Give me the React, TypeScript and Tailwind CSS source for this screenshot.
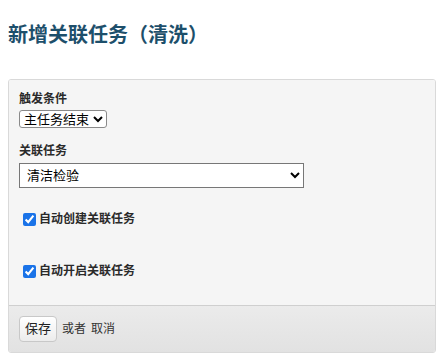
import React from "react";

const FONT = '"Liberation Sans", "Noto Sans CJK SC", sans-serif';

export default function App() {
  return (
    <div className="w-[437px] h-[363px] bg-white" style={{ fontFamily: FONT }}>
      <h1 className="pl-[8px] pt-[22px] text-[20px] leading-[26px] font-bold text-[#1d4f6b]">
        新增关联任务（清洗）
      </h1>

      <div className="mt-[31px] ml-[8px] mr-[1px] border border-[#d9d9d9] rounded-[3px] overflow-hidden">
        <div className="bg-[#f5f5f5] px-[10px] pt-[11px] pb-[14px] h-[225px]">
          <label className="block text-[12px] leading-[16px] font-bold text-[#2a2a2a]">触发条件</label>
          <select
            defaultValue="end"
            className="h-[18px] text-[13px] leading-[16px] bg-white border border-[#8a8a8a] rounded-[3px] px-0 text-black"
          >
            <option value="end">主任务结束</option>
          </select>

          <label className="block mt-[12px] text-[12px] leading-[16px] font-bold text-[#2a2a2a]">关联任务</label>
          <select
            defaultValue="clean"
            className="mt-[4px] w-[285px] h-[25px] text-[13px] bg-white border border-[#777] px-[3px] text-black"
          >
            <option value="clean">清洁检验</option>
          </select>

          <label className="flex items-center gap-[3px] mt-[22px] ml-[4px] text-[12px] font-bold text-[#2a2a2a]">
            <input type="checkbox" defaultChecked className="w-[13px] h-[13px] m-0 accent-[#1a73e8]" />
            自动创建关联任务
          </label>

          <label className="flex items-center gap-[3px] mt-[34px] ml-[4px] text-[12px] font-bold text-[#2a2a2a]">
            <input type="checkbox" defaultChecked className="w-[13px] h-[13px] m-0 accent-[#1a73e8]" />
            自动开启关联任务
          </label>
        </div>

        <div className="flex items-center gap-[5px] h-[47px] px-[10px] border-t border-[#cfcfcf] bg-gradient-to-b from-[#ebebeb] to-[#e2e2e2] text-[12px] text-[#333]">
          <button className="h-[26px] px-[5px] rounded-[4px] border border-[#c8c8c8] bg-gradient-to-b from-white to-[#ececec] text-[13px] text-[#222]">
            保存
          </button>
          <span>或者</span>
          <a className="text-[#333]">取消</a>
        </div>
      </div>
    </div>
  );
}
